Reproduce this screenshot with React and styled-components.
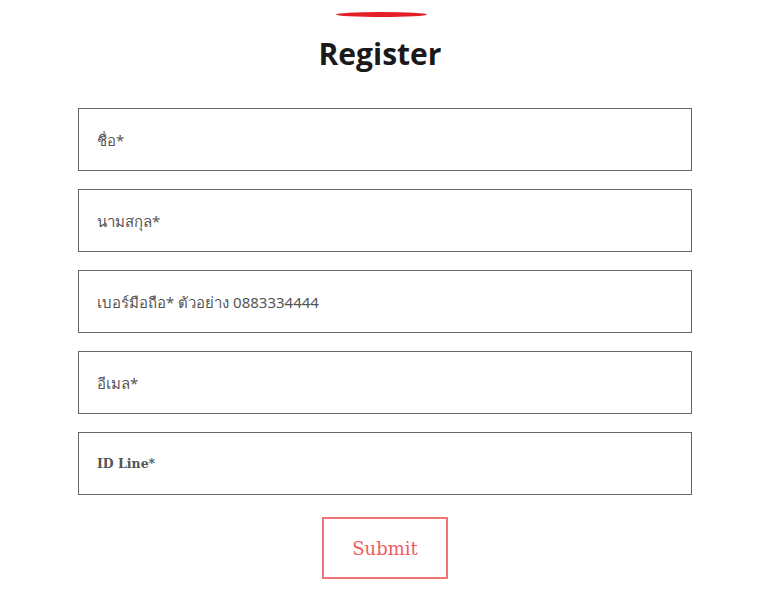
import React from 'react';
import styled, { createGlobalStyle } from 'styled-components';

const GlobalStyle = createGlobalStyle`
  body {
    margin: 0;
    background: #fff;
    font-family: "Noto Sans", "Liberation Sans", sans-serif;
  }
`;

const Page = styled.div`
  width: 768px;
  height: 604px;
  overflow: hidden;
  display: flex;
  flex-direction: column;
  align-items: center;
`;

const Accent = styled.div`
  margin: 12px 6px 0 0;
  width: 91px;
  height: 5px;
  background: #e41e26;
  border-radius: 50%;
`;

const Title = styled.h1`
  margin: 16px 0 0 -8px;
  font-family: "Open Sans", "Noto Sans", sans-serif;
  font-weight: 700;
  font-size: 30px;
  line-height: 42px;
  color: #1a1a1a;
`;

const Form = styled.form`
  margin: 33px 0 0 2px;
  width: 614px;
  display: flex;
  flex-direction: column;
  align-items: center;
  gap: 18px;
`;

const Field = styled.input`
  box-sizing: border-box;
  width: 100%;
  height: 63px;
  padding: 0 18px;
  border: 1px solid #666;
  border-radius: 0;
  outline: none;
  background: #fff;
  font-family: ${p => (p.$serif ? '"DejaVu Serif", serif' : '"Noto Sans", "Liberation Sans", sans-serif')};
  font-size: ${p => (p.$serif ? '12.5px' : '15px')};
  font-weight: ${p => (p.$serif ? 700 : 400)};
  color: #333;
  &::placeholder {
    color: #555;
  }
`;

const Submit = styled.button`
  margin-top: 4px;
  width: 126px;
  height: 62px;
  background: #fff;
  border: 2px solid #f07575;
  color: #ee5d5d;
  font-family: "DejaVu Serif", Georgia, serif;
  font-size: 18px;
  cursor: pointer;
`;

export default function App() {
  return (
    <Page>
      <GlobalStyle />
      <Accent />
      <Title>Register</Title>
      <Form onSubmit={e => e.preventDefault()}>
        <Field placeholder="ชื่อ*" />
        <Field placeholder="นามสกุล*" />
        <Field placeholder="เบอร์มือถือ* ตัวอย่าง 0883334444" />
        <Field placeholder="อีเมล*" />
        <Field $serif placeholder="ID Line*" />
        <Submit type="submit">Submit</Submit>
      </Form>
    </Page>
  );
}
